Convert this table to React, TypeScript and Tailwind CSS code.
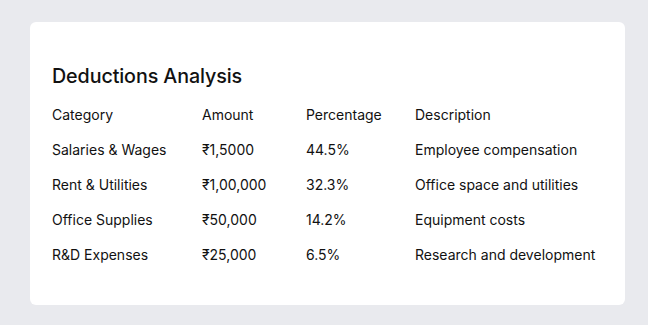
import React from "react";

const rows = [
  ["Salaries & Wages", "₹1,5000", "44.5%", "Employee compensation"],
  ["Rent & Utilities", "₹1,00,000", "32.3%", "Office space and utilities"],
  ["Office Supplies", "₹50,000", "14.2%", "Equipment costs"],
  ["R&D Expenses", "₹25,000", "6.5%", "Research and development"],
];

export default function App() {
  return (
    <div
      className="w-[648px] h-[325px] bg-[#e9eaee] pl-[30px] pr-[23px] pt-[22px] pb-[20px] text-[#111111]"
      style={{ fontFamily: "Inter, 'Noto Sans', sans-serif" }}
    >
      <div className="h-full bg-white rounded-[6px] pl-[22px] pr-[16px] pt-[40px]">
        <h2 className="text-[19.7px] leading-[28px] font-medium tracking-[-0.1px]">Deductions Analysis</h2>
        <div className="mt-[7px] grid grid-cols-[150px_104px_109px_1fr] text-[14px] leading-[35px]">
          {["Category", "Amount", "Percentage", "Description"].map((h) => (
            <div key={h}>{h}</div>
          ))}
          {rows.map((r) =>
            r.map((c, i) => <div key={r[0] + i}>{c}</div>)
          )}
        </div>
      </div>
    </div>
  );
}
